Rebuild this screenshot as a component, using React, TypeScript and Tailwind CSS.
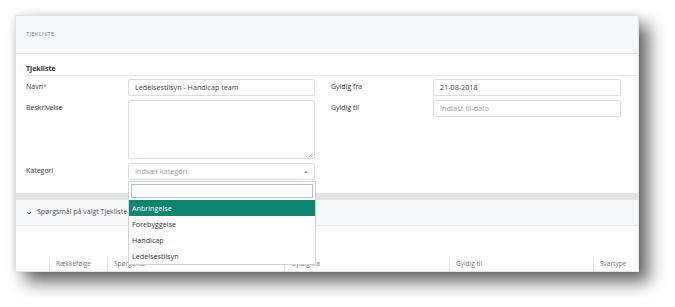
import React from "react";

const options = ["Anbringelse", "Forebyggelse", "Handicap", "Ledelsestilsyn"];

const columns = [
  { label: "Rækkefølge", w: "w-[58px]" },
  { label: "Spørgsmål", w: "w-[177px]" },
  { label: "Gyldig fra", w: "w-[165px]" },
  { label: "Gyldig til", w: "w-[144px]" },
  { label: "Svartype", w: "flex-1" },
];

function Label({ children }: { children: React.ReactNode }) {
  return (
    <div className="w-[102px] h-[17px] flex items-center text-[7px] text-[#333]">
      {children}
    </div>
  );
}

function Input({ value, placeholder }: { value?: string; placeholder?: string }) {
  return (
    <div className="h-[17px] border border-[#d9dde3] rounded-[2px] bg-white px-[6px] flex items-center text-[7.2px]">
      {value ? (
        <span className="text-[#444]">{value}</span>
      ) : (
        <span className="text-[#9ca0a6]">{placeholder}</span>
      )}
    </div>
  );
}

export default function App() {
  return (
    <div
      className="w-[675px] h-[307px] bg-white pt-[15px] pl-[15px]"
      style={{ fontFamily: '"Open Sans", "Liberation Sans", sans-serif' }}
    >
      <div className="relative w-[624px] h-[257px] bg-white border border-[#e2e2e2] shadow-[10px_10px_16px_rgba(0,0,0,0.6),0_0_6px_rgba(0,0,0,0.12)]">
        <div className="overflow-hidden h-full">
          {/* header */}
          <div className="h-[38px] bg-[#f7f8fa] border-b border-[#e5e7ea] px-[10px] flex items-center">
            <span className="text-[6px] tracking-[0.2px] text-[#7d838d]">TJEKLISTE</span>
          </div>

          {/* form */}
          <div className="pl-[10px]">
            <div className="h-[22px] flex items-end pb-[2px] border-b border-[#e8e8e8]">
              <span className="text-[7px] font-bold text-[#333] leading-[9px]">Tjekliste</span>
            </div>
            <div className="pt-[3px] pb-[13px] flex flex-col gap-[4px]">
              <div className="flex">
                <Label>
                  Navn<span className="text-[#d9534f]">*</span>
                </Label>
                <div className="w-[187px]">
                  <Input value="Ledelsestilsyn - Handicap team" />
                </div>
                <div className="w-[16px]" />
                <Label>Gyldig fra</Label>
                <div className="w-[188px]">
                  <Input value="21-08-2018" />
                </div>
              </div>
              <div className="flex">
                <Label>Beskrivelse</Label>
                <div className="relative w-[187px] h-[59px] border border-[#d9dde3] rounded-[2px] bg-white">
                  <svg className="absolute right-[1px] bottom-[1px]" width="5" height="5" viewBox="0 0 5 5">
                    <path d="M5 1 L1 5 M5 3 L3 5" stroke="#999" strokeWidth="0.7" />
                  </svg>
                </div>
                <div className="w-[16px]" />
                <Label>Gyldig til</Label>
                <div className="w-[188px]">
                  <Input placeholder="Indtast til-dato" />
                </div>
              </div>
              <div className="flex">
                <Label>Kategori</Label>
                <div className="w-[187px] h-[17px] border border-[#d9dde3] rounded-[2px] bg-white px-[6px] flex items-center justify-between text-[7.2px]">
                  <span className="text-[#9ca0a6]">Indsæt kategori</span>
                  <span className="text-[4px] text-[#666]">▲</span>
                </div>
              </div>
            </div>
          </div>

          {/* gray band */}
          <div className="h-[7px] bg-[#e4e4e4]" />

          {/* second section header */}
          <div className="h-[26px] bg-[#f7f8fa] border-b border-[#e5e7ea] px-[10px] flex items-center gap-[5px] text-[7px] text-[#555]">
            <svg width="6" height="4" viewBox="0 0 6 4">
              <path d="M0.8 0.8 L3 3 L5.2 0.8" fill="none" stroke="#666" strokeWidth="0.9" />
            </svg>
            <span>Spørgsmål på valgt Tjekliste</span>
          </div>

          {/* table header */}
          <div className="pt-[30px] pl-[33px] flex text-[6.5px] text-[#777]">
            {columns.map((c) => (
              <div key={c.label} className={`${c.w} shrink-0 h-[15px] border-l border-[#e4e4e4] pl-[6px] flex items-center whitespace-nowrap`}>
                {c.label}
              </div>
            ))}
          </div>
        </div>

        {/* dropdown */}
        <div className="absolute left-[112px] top-[165px] w-[188px] bg-white border border-[#cfd3d8] text-[7.2px]">
          <div className="p-[2px] h-[18px]">
            <div className="h-full border border-[#b9bec5] bg-white" />
          </div>
          {options.map((o, i) => (
            <div
              key={o}
              className={`h-[16px] px-[3px] flex items-center ${
                i === 0 ? "bg-[#0f8471] text-white" : "text-[#333]"
              }`}
            >
              {o}
            </div>
          ))}
        </div>
      </div>
    </div>
  );
}
